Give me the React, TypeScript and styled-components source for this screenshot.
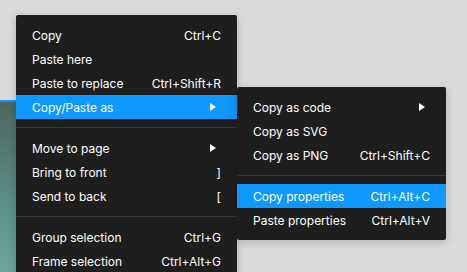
import styled, { createGlobalStyle } from 'styled-components'

const GlobalStyle = createGlobalStyle`
  html, body {
    margin: 0;
    padding: 0;
    background: #dcdad9;
    font-family: Inter, 'Noto Sans', sans-serif;
    overflow: hidden;
  }
`

const Canvas = styled.div`
  position: relative;
  width: 467px;
  height: 272px;
  overflow: hidden;
`

// frame on the canvas, mostly hidden under the menu
const Frame = styled.div`
  position: absolute;
  left: -40px;
  top: 100px;
  width: 120px;
  height: 180px;
  border-top: 2px solid #0d99ff;
  background: linear-gradient(180deg, #4d645f 0%, #5b8f86 55%, #6aa99d 100%);
`

const ContextMenu = styled.div`
  position: absolute;
  left: 16px;
  top: 15px;
  width: 221px;
  padding: 8px 0;
  box-sizing: border-box;
  background: #1e1e1e;
  border-radius: 2px;
  box-shadow: 0 2px 8px rgba(0, 0, 0, 0.18);
`

const SubMenu = styled(ContextMenu)`
  left: 100%;
  top: -8px;
  width: 209px;
`

const Row = styled.div<{ active?: boolean }>`
  position: relative;
  height: 24px;
  padding: 0 16px;
  display: flex;
  align-items: center;
  justify-content: space-between;
  font-size: 12px;
  color: #ffffff;
  background: ${(p) => (p.active ? '#0d99ff' : 'transparent')};
  white-space: nowrap;
`

const Shortcut = styled.span`
  color: #ffffff;
`

const Arrow = styled.span`
  width: 0;
  height: 0;
  margin-right: 5px;
  border-top: 4px solid transparent;
  border-bottom: 4px solid transparent;
  border-left: 6px solid #ffffff;
`

const Divider = styled.div`
  height: 1px;
  margin: 8px 0;
  background: #383838;
`

type Item =
  | { label: string; shortcut?: string; sub?: boolean; active?: boolean; children?: Item[] }
  | 'sep'

const subItems: Item[] = [
  { label: 'Copy as code', sub: true },
  { label: 'Copy as SVG' },
  { label: 'Copy as PNG', shortcut: 'Ctrl+Shift+C' },
  'sep',
  { label: 'Copy properties', shortcut: 'Ctrl+Alt+C', active: true },
  { label: 'Paste properties', shortcut: 'Ctrl+Alt+V' },
]

const mainItems: Item[] = [
  { label: 'Copy', shortcut: 'Ctrl+C' },
  { label: 'Paste here' },
  { label: 'Paste to replace', shortcut: 'Ctrl+Shift+R' },
  { label: 'Copy/Paste as', sub: true, active: true, children: subItems },
  'sep',
  { label: 'Move to page', sub: true },
  { label: 'Bring to front', shortcut: ']' },
  { label: 'Send to back', shortcut: '[' },
  'sep',
  { label: 'Group selection', shortcut: 'Ctrl+G' },
  { label: 'Frame selection', shortcut: 'Ctrl+Alt+G' },
]

function MenuRows({ items }: { items: Item[] }) {
  return (
    <>
      {items.map((item, i) =>
        item === 'sep' ? (
          <Divider key={i} />
        ) : (
          <Row key={i} active={item.active}>
            <span>{item.label}</span>
            {item.sub ? <Arrow /> : item.shortcut ? <Shortcut>{item.shortcut}</Shortcut> : null}
            {item.children && (
              <SubMenu>
                <MenuRows items={item.children} />
              </SubMenu>
            )}
          </Row>
        )
      )}
    </>
  )
}

export default function App() {
  return (
    <>
      <GlobalStyle />
      <Canvas>
        <Frame />
        <ContextMenu>
          <MenuRows items={mainItems} />
        </ContextMenu>
      </Canvas>
    </>
  )
}
